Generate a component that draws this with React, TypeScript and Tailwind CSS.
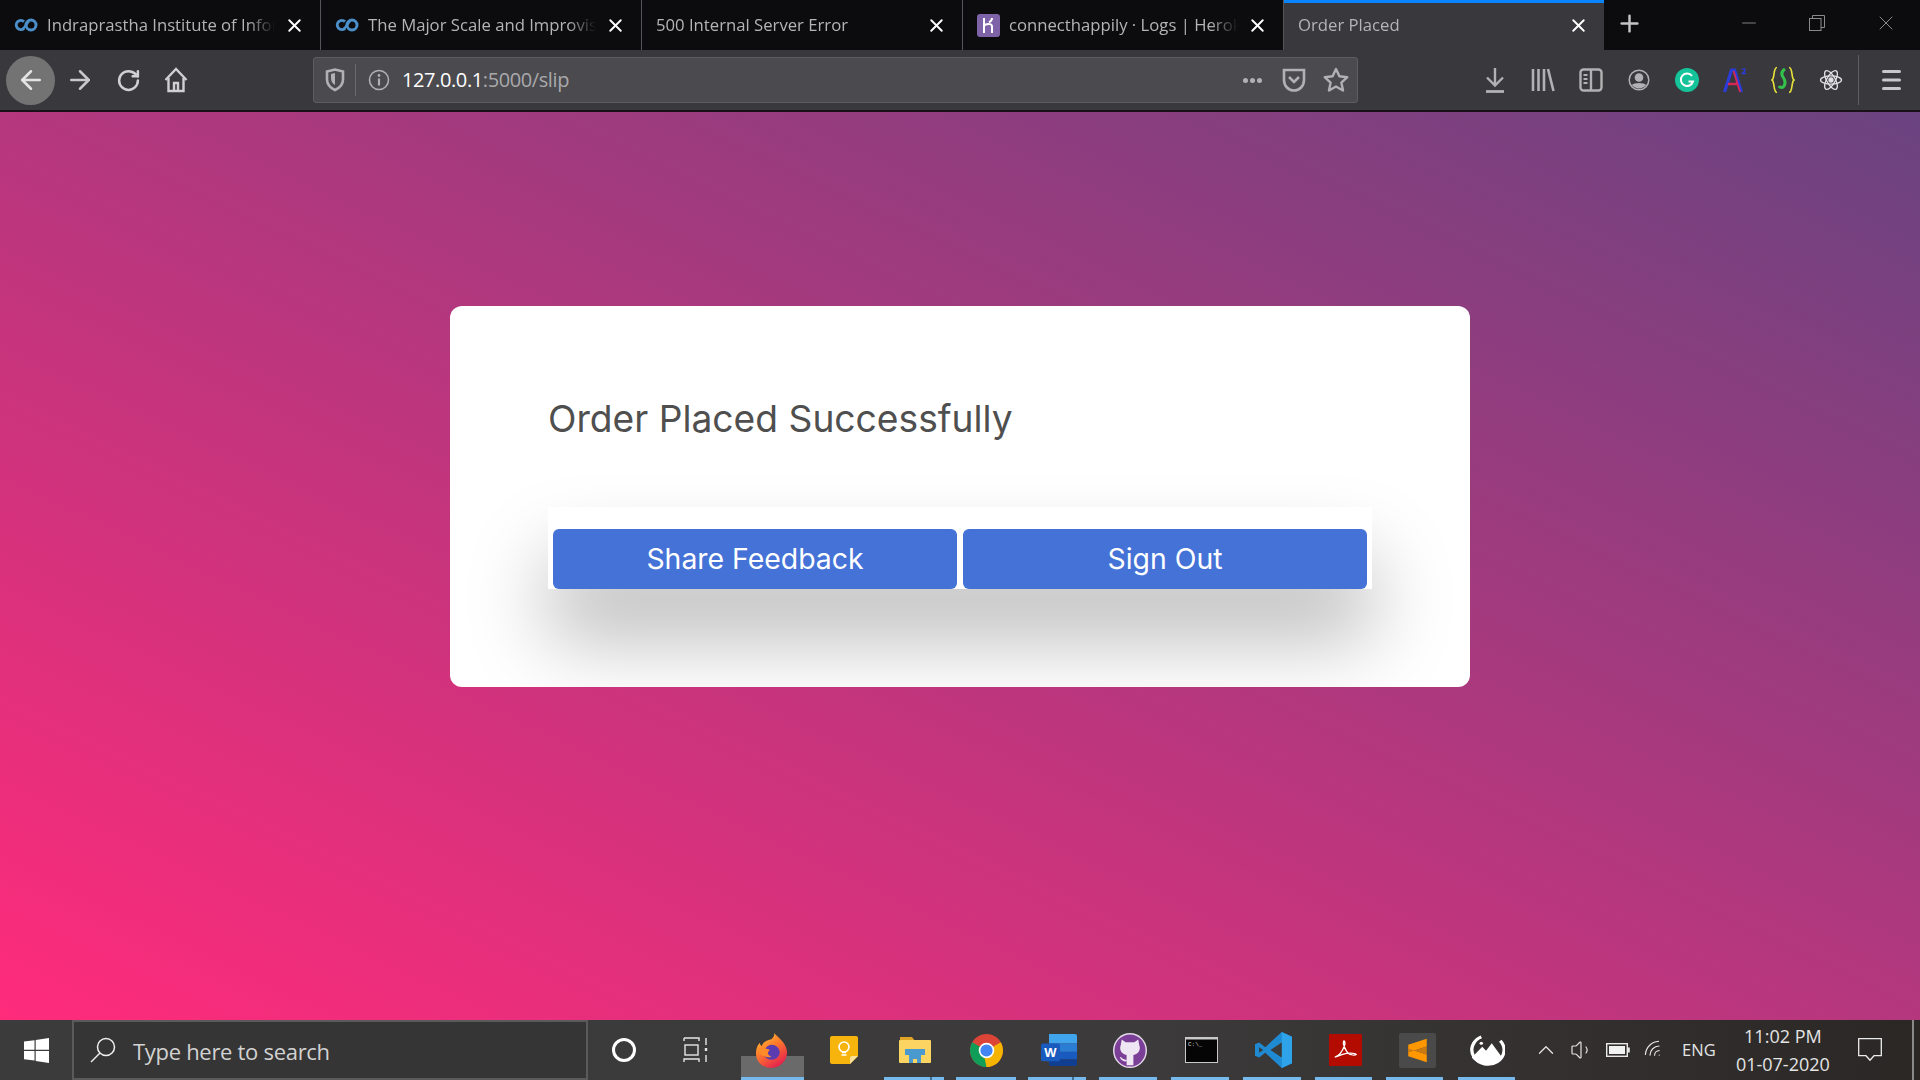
import { X, Plus, Minus, ArrowLeft, ArrowRight, RotateCw, ChevronUp, Volume1, Wifi } from "lucide-react";

const ui = "font-['Open_Sans','Noto_Sans',sans-serif]";

const CoIcon = () => (
  <svg width="24" height="14" viewBox="0 0 24 14" fill="none" className="shrink-0">
    <path d="M10 3.6A4.6 4.6 0 1 0 10 10.4" stroke="#4a8fc9" strokeWidth="3" />
    <circle cx="17" cy="7" r="5" stroke="#4a8fc9" strokeWidth="3" />
    <path d="M9 11 15 3" stroke="#4a8fc9" strokeWidth="2.4" />
  </svg>
);

const HerokuIcon = () => (
  <svg width="23" height="23" viewBox="0 0 23 23" className="shrink-0">
    <rect width="23" height="23" rx="3" fill="#7f63a8" />
    <path d="M7 4v15M7 11.5c3-1.6 8-2.4 8 1V19M15 4c0 2-1.2 3.4-3 4.4" stroke="#fff" strokeWidth="2" fill="none" />
  </svg>
);

type TabProps = { title: string; icon?: React.ReactNode; active?: boolean; width: string };

const Tab = ({ title, icon, active, width }: TabProps) => (
  <div
    className={`${width} h-full shrink-0 flex items-center gap-[9px] pl-[14px] pr-[15px] ${
      active ? "bg-[#38383d] border-t-[3px] border-[#0a84ff] pb-[3px]" : "border-r border-[#55555a]"
    }`}
  >
    {icon}
    <div className="flex-1 min-w-0 overflow-hidden whitespace-nowrap text-[16.7px] text-[#b4b4b6] [mask-image:linear-gradient(to_right,black_88%,transparent)]">
      {title}
    </div>
    <X size={21} strokeWidth={2.2} className="text-white shrink-0" />
  </div>
);

const Shield = () => (
  <svg width="20" height="24" viewBox="0 0 20 24" fill="none">
    <path d="M2 3.500 10 1.500l8 2v8c0 5-3.500 8.500-8 10.500-4.500-2-8-5.500-8-10.500z" stroke="#b1b1b3" strokeWidth="2.600" />
    <path d="M10 5v12c-2.500-1.400-4-3.600-4-6.500V6z" fill="#b1b1b3" />
  </svg>
);

const Info = () => (
  <svg width="22" height="22" viewBox="0 0 22 22" fill="none">
    <circle cx="11" cy="11" r="9.500" stroke="#b1b1b3" strokeWidth="1.600" />
    <circle cx="11" cy="6.500" r="1.400" fill="#b1b1b3" />
    <path d="M11 9.500v7" stroke="#b1b1b3" strokeWidth="2.200" />
  </svg>
);

const Home = () => (
  <svg width="24" height="26" viewBox="0 0 24 26" fill="none" stroke="#d0d0d2" strokeWidth="2.400">
    <path d="M1.500 13 12 2l10.500 11" />
    <path d="M4.500 11v13h15V11" />
    <path d="M10 24v-8h4v8" />
  </svg>
);

const Pocket = () => (
  <svg width="24" height="25" viewBox="0 0 24 25" fill="none" stroke="#b1b1b3" strokeWidth="2.600">
    <path d="M2 2h20v10c0 6-4.500 10.500-10 10.500S2 18 2 12z" />
    <path d="m7 9 5 5 5-5" />
  </svg>
);

const Star = () => (
  <svg width="26" height="26" viewBox="0 0 26 26" fill="none" stroke="#b1b1b3" strokeWidth="2.400" strokeLinejoin="round">
    <path d="m13 2 3.400 7.300 7.900.9-5.900 5.400 1.600 7.900-7-4-7 4 1.600-7.900-5.900-5.400 7.900-.9z" />
  </svg>
);

const Download = () => (
  <svg width="20" height="26" viewBox="0 0 20 26" fill="none" stroke="#b1b1b3" strokeWidth="2.400">
    <path d="M10 1v17M2 10.500 10 18.500l8-8" />
    <path d="M1 24.500h18" strokeWidth="2.800" />
  </svg>
);

const Library = () => (
  <svg width="24" height="24" viewBox="0 0 24 24" fill="none" stroke="#b1b1b3" strokeWidth="2.600">
    <path d="M2 1v22M7.500 1v22M13 1v22M17 1l5.500 22" />
  </svg>
);

const Sidebar = () => (
  <svg width="24" height="24" viewBox="0 0 24 24" fill="none" stroke="#b1b1b3" strokeWidth="2.400">
    <rect x="1.500" y="1.500" width="21" height="21" rx="3" />
    <path d="M12 1.500v21" />
    <path d="M4.500 7h4M4.500 11h4M4.500 15h4" strokeWidth="1.800" />
  </svg>
);

const Account = () => (
  <svg width="22" height="22" viewBox="0 0 22 22" fill="none">
    <circle cx="11" cy="11" r="9.800" stroke="#b1b1b3" strokeWidth="1.500" />
    <circle cx="11" cy="8.500" r="4.300" fill="#b1b1b3" />
    <path d="M3.800 16c2-2.800 12.400-2.800 14.400 0-3.500 4.600-10.900 4.600-14.400 0z" fill="#b1b1b3" />
  </svg>
);

const Grammarly = () => (
  <svg width="24" height="24" viewBox="0 0 24 24" fill="none">
    <circle cx="12" cy="12" r="12" fill="#15c39a" />
    <path d="M17 8a6.200 6.200 0 1 0 1 5.500h-4.500" stroke="#fff" strokeWidth="2" />
  </svg>
);

const AngularA = () => (
  <svg width="24" height="26" viewBox="0 0 24 26" fill="none">
    <path d="M1.500 25 8.500 3h3L18.500 25" stroke="#2b3cd8" strokeWidth="3.200" />
    <path d="M5 17h10" stroke="#d8285a" strokeWidth="2.400" />
    <path d="M10.500 4l6.500 21" stroke="#d8285a" strokeWidth="1.800" />
    <path d="M19 2.500c2-1.500 4 0 2.500 1.800L19.500 6.500H23" stroke="#2b3cd8" strokeWidth="1.400" />
  </svg>
);

const Braces = () => (
  <svg width="24" height="28" viewBox="0 0 24 28" fill="none">
    <path d="M6 1.500C2 1.500 4 12 1 14c3 2 1 12.500 5 12.500M18 1.500c4 0 2 10.500 5 12.500-3 2-1 12.500-5 12.500" stroke="#e8e23a" strokeWidth="1.600" />
    <path d="M14 3c-3 2-4 5-2 8 2 3 3 6 1 9-1 2-4 2-5 0" stroke="#35c24a" strokeWidth="3" />
  </svg>
);

const ReactIcon = () => (
  <svg width="24" height="24" viewBox="-12 -12 24 24" fill="none" stroke="#e2e2e4" strokeWidth="1.300">
    <ellipse rx="10.500" ry="4.200" />
    <ellipse rx="10.500" ry="4.200" transform="rotate(60)" />
    <ellipse rx="10.500" ry="4.200" transform="rotate(120)" />
    <circle r="2" fill="#e2e2e4" />
  </svg>
);

const Hamburger = () => (
  <svg width="20" height="22" viewBox="0 0 20 22" fill="#c8c8ca">
    <rect y="1" width="19" height="3" rx="1.500" />
    <rect y="9.500" width="19" height="3" rx="1.500" />
    <rect y="18" width="19" height="3" rx="1.500" />
  </svg>
);

const Restore = () => (
  <svg width="16" height="16" viewBox="0 0 16 16" fill="none" stroke="#8a8a8c" strokeWidth="1">
    <rect x=".5" y="3.500" width="11.500" height="12" />
    <path d="M3.500 3.500V.5h12v12H12" />
  </svg>
);

const Windows = () => (
  <svg width="25" height="25" viewBox="0 0 25 25" fill="#fff">
    <path d="M0 3.600 10.500 2.200v9.500H0zM11.700 2 25 0v11.700H11.700zM0 13h10.500v9.600L0 21.200zM11.700 13H25v12l-13.300-1.900z" />
  </svg>
);

const SearchGlass = () => (
  <svg width="26" height="26" viewBox="0 0 26 26" fill="none" stroke="#f0f0f0" strokeWidth="1.500">
    <circle cx="16" cy="10" r="8.500" />
    <path d="M10 16 1 25" />
  </svg>
);

const TaskView = () => (
  <svg width="26" height="26" viewBox="0 0 26 26" fill="none" stroke="#e6e6e6" strokeWidth="1.400">
    <path d="M1 1h15v3M1 1v3M1 25v-3h15v3" />
    <rect x="2" y="8" width="13" height="10" />
    <path d="M23 1v7M23 18v7" />
    <rect x="21.800" y="11" width="2.400" height="3" fill="#e6e6e6" stroke="none" />
  </svg>
);

const Firefox = () => (
  <svg width="33" height="35" viewBox="0 0 34 40" preserveAspectRatio="none">
    <defs>
      <linearGradient id="ff" x1="0" y1="0" x2="0.600" y2="1">
        <stop offset="0" stopColor="#ffd23a" />
        <stop offset="0.500" stopColor="#ff7a2a" />
        <stop offset="1" stopColor="#e5254e" />
      </linearGradient>
    </defs>
    <path d="M20 0c2 4 12 10 13 21 .8 10-7 19-16 19S1 33 1 23C1 17 3 13 5 11c0 2 1 3 2 4 1-5 6-7 10-8 2-2 3-4 3-7z" fill="url(#ff)" />
    <circle cx="17" cy="22" r="8.500" fill="#5b3bb0" />
    <path d="M3 20c3-5 7-7 12-6-3 1-4 3-4 4 3 0 4 1 4 2-3 2-2 6 2 7-5 2-12-1-14-7z" fill="#ff8a2a" />
  </svg>
);

const KeepIcon = () => (
  <svg width="28" height="28" viewBox="0 0 28 28">
    <path d="M2 0h24a2 2 0 0 1 2 2v18l-8 8H2a2 2 0 0 1-2-2V2a2 2 0 0 1 2-2z" fill="#f6b40c" />
    <path d="M28 20h-6a2 2 0 0 0-2 2v6z" fill="#fbe09a" />
    <circle cx="14" cy="11" r="5" fill="none" stroke="#fff" strokeWidth="1.600" />
    <path d="M11.500 19h5M12 16.500h4" stroke="#fff" strokeWidth="1.600" />
  </svg>
);

const FilesIcon = () => (
  <svg width="32" height="26" viewBox="0 0 32 26">
    <path d="M1 0h12l3 4H1z" fill="#e0a526" />
    <rect y="3" width="32" height="23" rx="1" fill="#fcd462" />
    <path d="M6 12h20v6H6z" fill="#4a9ad0" />
    <path d="M10 26v-8h12v8z" fill="#4a9ad0" />
    <path d="M14 26v-4h4v4z" fill="#fcd462" />
  </svg>
);

const ChromeIcon = () => (
  <svg width="33" height="33" viewBox="-17 -17 34 34">
    <circle r="17" fill="#db4437" />
    <path d="M-14.700 -8.500A17 17 0 0 0 0 17L8 3 0 0z" fill="#0f9d58" />
    <path d="M14.700 -8.500A17 17 0 0 1 0 17L-2 8 0 0z" fill="#f4b400" />
    <circle r="8" fill="#fff" />
    <circle r="6.300" fill="#4285f4" />
  </svg>
);

const WordIcon = () => (
  <svg width="36" height="32" viewBox="0 0 36 34" preserveAspectRatio="none">
    <path d="M8 0h26a2 2 0 0 1 2 2v8H8z" fill="#41a5ee" />
    <path d="M8 10h28v9H8z" fill="#2b7cd3" />
    <path d="M8 19h28v8H8z" fill="#185abd" />
    <path d="M8 27h28v5a2 2 0 0 1-2 2H10a2 2 0 0 1-2-2z" fill="#103f91" />
    <rect y="10" width="19" height="19" rx="2" fill="#185abd" />
    <text x="9.500" y="24" textAnchor="middle" fontSize="13" fontWeight="700" fill="#fff" fontFamily="Liberation Sans, sans-serif">W</text>
  </svg>
);

const GithubIcon = () => (
  <svg width="34" height="35" viewBox="0 0 35 38" preserveAspectRatio="none">
    <ellipse cx="17.500" cy="19" rx="17.500" ry="19" fill="#e5dce9" />
    <ellipse cx="17.500" cy="19" rx="16" ry="17.500" fill="#7b3f98" />
    <path d="M9 7l4 3h9l4-3 1 6c2 5-1 10-6 11v11h-7V24c-5-1-8-6-6-11z" fill="#eee6f2" />
    <path d="M7 26c2 0 3 3 7 3v2c-4 0-6-2-7-5z" fill="#eee6f2" />
  </svg>
);

const CmdIcon = () => (
  <svg width="33" height="26" viewBox="0 0 33 26">
    <rect width="33" height="26" fill="#c9c9c9" />
    <rect x="1" y="2.500" width="31" height="22.500" fill="#050505" />
    <text x="3" y="9" fontSize="6" fill="#d8d8d8" fontFamily="Liberation Mono, monospace">C:\_</text>
  </svg>
);

const VsCodeIcon = () => (
  <svg width="37" height="36" viewBox="0 0 36 38" preserveAspectRatio="none">
    <path d="M26 0 36 5v28l-10 5L10 22l-6 5-4-2V13l4-2 6 5z" fill="#1f8ad2" />
    <path d="M26 0 36 5v28l-10 5z" fill="#2ea3ea" />
    <path d="M26 11 15 19l11 8z" fill="#3a3a3a" />
    <path d="M4 16l4 3-4 3z" fill="#3a3a3a" />
  </svg>
);

const AcrobatIcon = () => (
  <svg width="33" height="32" viewBox="0 0 34 36" fill="none" preserveAspectRatio="none">
    <rect width="34" height="36" rx="1" fill="#b30b00" />
    <path d="M6 26c4-1 8-7 10-13 1-3 0-6-1-5-1 3 2 11 5 14 2 2 7 2 8 1-1-2-9-2-14 0-3 1-6 3-8 3z" stroke="#fff" strokeWidth="1.400" />
  </svg>
);

const SublimeIcon = () => (
  <svg width="37" height="35" viewBox="0 0 36 36" preserveAspectRatio="none">
    <rect width="36" height="36" rx="2" fill="#4a4a4a" />
    <path d="M27 6v8L9 20v-8zM9 16l18 6v8L9 24z" fill="#ff9800" />
    <path d="M9 20l18-6v8L9 16z" fill="#c97a10" />
  </svg>
);

const MountainIcon = () => (
  <svg width="36" height="32" viewBox="0 0 38 38" fill="none" preserveAspectRatio="none">
    <path d="M13 3.500A17 17 0 1 0 33 8" stroke="#fff" strokeWidth="3.500" />
    <path d="M3 28 14 15l4 5 6-9 11 17c-3 6-10 8-16 8S6 33 3 28z" fill="#fff" />
    <circle cx="13" cy="11" r="1.800" fill="#fff" />
  </svg>
);

const Battery = () => (
  <svg width="24" height="14" viewBox="0 0 24 14" fill="none">
    <rect x=".7" y=".7" width="20.600" height="12.600" stroke="#e8e8e8" strokeWidth="1.400" />
    <rect x="3" y="3" width="16" height="8" fill="#f2f2f2" />
    <rect x="21.800" y="4.500" width="2" height="5" fill="#e8e8e8" />
  </svg>
);

const Notification = () => (
  <svg width="24" height="24" viewBox="0 0 24 24" fill="none" stroke="#ececec" strokeWidth="1.300">
    <path d="M.7.700h22.600v17H16l-4 4.500-4-4.500H.7z" />
  </svg>
);

const Slot = ({ w, children }: { w: string; children: React.ReactNode }) => (
  <div className={`${w} shrink-0 flex items-center justify-center`}>{children}</div>
);

type TaskIconProps = { children: React.ReactNode; bar: string; active?: boolean; split?: boolean; w?: string };

const TaskIcon = ({ children, bar, active, split, w = "w-[71.7px]" }: TaskIconProps) => (
  <div className={`${w} h-full shrink-0 relative flex items-center justify-center`}>
    {active && <div className="absolute bottom-0 left-[5px] w-[63px] h-[24px] bg-[#6a6a6a]" />}
    {bar && (
      <div
        className={`absolute bottom-0 left-[5px] h-[3px] ${bar} ${
          split
            ? "bg-[linear-gradient(to_right,#76b9ed_76%,#3f6f92_76%,#3f6f92_80%,#76b9ed_80%)]"
            : "bg-[#76b9ed]"
        }`}
      />
    )}
    <div className="relative flex">{children}</div>
  </div>
);

export default function App() {
  return (
    <div className={`w-[1920px] h-[1080px] overflow-hidden flex flex-col ${ui}`}>
      {/* tab strip */}
      <div className="h-[50px] shrink-0 bg-[#0c0c0e] flex items-center">
        <Tab width="w-[321px]" icon={<CoIcon />} title="Indraprastha Institute of Information Technology" />
        <Tab width="w-[321px]" icon={<CoIcon />} title="The Major Scale and Improvisation" />
        <Tab width="w-[321px]" title="500 Internal Server Error" />
        <Tab width="w-[321px]" icon={<HerokuIcon />} title="connecthappily · Logs | Heroku" />
        <Tab width="w-[320px]" active title="Order Placed" />
        <div className="w-[50px] flex justify-center pb-[4px]">
          <Plus size={27} strokeWidth={2.2} className="text-[#c4c4c6]" />
        </div>
        <div className="flex-1 flex items-center justify-end pb-[4px] pr-[22px] gap-[49px]">
          <Minus size={22} strokeWidth={1} className="text-[#8a8a8c]" />
          <Restore />
          <X size={24} strokeWidth={1} className="text-[#8a8a8c]" />
        </div>
      </div>

      {/* nav toolbar */}
      <div className="h-[60px] shrink-0 bg-[#38383d] flex items-center pl-[6px]">
        <div className="w-[49px] h-[49px] mr-[1px] rounded-full bg-[#737373] flex items-center justify-center shrink-0">
          <ArrowLeft size={30} strokeWidth={2} className="text-[#e4e4e4]" />
        </div>
        <Slot w="w-[48px]"><ArrowRight size={30} strokeWidth={2} className="text-[#c8c8ca]" /></Slot>
        <Slot w="w-[48px]"><RotateCw size={25} strokeWidth={2.4} className="text-[#d0d0d2]" /></Slot>
        <Slot w="w-[48px]"><Home /></Slot>
        <div className="w-[113px] shrink-0" />
        <div className="w-[1045px] h-[46px] shrink-0 bg-[#4a4a4f] border border-[#5e5e62] rounded-[3px] flex items-center">
          <div className="w-[42px] h-[32px] flex items-center justify-center border-r border-[#6a6a6e]"><Shield /></div>
          <div className="w-[46px] flex items-center justify-center"><Info /></div>
          <div className="flex-1 text-[20px] tracking-[-0.4px] text-[#a9a9ab]">
            <span className="text-white">127.0.0.1</span>:5000/slip
          </div>
          <Slot w="w-[26px]">
            <div className="flex gap-[2px]">
              <div className="w-[5px] h-[5px] rounded-full bg-[#b1b1b3]" />
              <div className="w-[5px] h-[5px] rounded-full bg-[#b1b1b3]" />
              <div className="w-[5px] h-[5px] rounded-full bg-[#b1b1b3]" />
            </div>
          </Slot>
          <Slot w="w-[58px]"><Pocket /></Slot>
          <Slot w="w-[26px]"><Star /></Slot>
          <div className="w-[8px]" />
        </div>
        <div className="w-[113px] shrink-0" />
        <Slot w="w-[48px]"><Download /></Slot>
        <Slot w="w-[48px]"><Library /></Slot>
        <Slot w="w-[48px]"><Sidebar /></Slot>
        <Slot w="w-[48px]"><Account /></Slot>
        <Slot w="w-[48px]"><Grammarly /></Slot>
        <Slot w="w-[48px]"><AngularA /></Slot>
        <Slot w="w-[48px]"><Braces /></Slot>
        <Slot w="w-[48px]"><ReactIcon /></Slot>
        <div className="w-[1px] h-[50px] bg-[#5e5e62] ml-[3px] shrink-0" />
        <Slot w="w-[66px]"><Hamburger /></Slot>
      </div>
      <div className="h-[2px] shrink-0 bg-[#1a1018]" />

      {/* page */}
      <div className="flex-1 min-h-0 bg-[linear-gradient(to_top_right,#ff2b7b,#6a4380)] flex justify-center pt-[194px]">
        <div className="w-[1020px] h-[381px] bg-white rounded-[12px] overflow-hidden pt-[88px] px-[98px] flex flex-col">
          <h1 className="font-['Inter',sans-serif] text-[37.2px] leading-[50px] text-[#4f4f4f] font-normal">
            Order Placed Successfully
          </h1>
          <div className="mt-[63px] h-[82px] shrink-0 bg-white flex items-end gap-[6px] px-[5px] shadow-[0_50px_80px_rgba(0,0,0,0.27)]">
            <button className="flex-1 h-[60px] rounded-[6px] bg-[#4472d6] text-white text-[28.4px] pt-[1px] font-['Inter',sans-serif]">
              Share Feedback
            </button>
            <button className="flex-1 h-[60px] rounded-[6px] bg-[#4472d6] text-white text-[28.4px] pt-[1px] font-['Inter',sans-serif]">
              Sign Out
            </button>
          </div>
        </div>
      </div>

      {/* taskbar */}
      <div className="h-[60px] shrink-0 bg-[linear-gradient(to_right,#3b3b3b,#3c3a3a_60%,#2a2725)] flex items-center text-[#e4e4e4]">
        <Slot w="w-[72px]"><Windows /></Slot>
        <div className="w-[516px] h-full shrink-0 bg-[#353535] border-x-2 border-y-2 border-[#5a5a5a] flex items-center">
          <div className="ml-[16px] flex"><SearchGlass /></div>
          <span className="ml-[17px] pt-[2px] text-[22px] text-[#d2d2d2] tracking-[-0.3px]">Type here to search</span>
        </div>
        <Slot w="w-[71px]">
          <div className="w-[24px] h-[24px] rounded-full border-[3px] border-white" />
        </Slot>
        <Slot w="w-[73px]"><TaskView /></Slot>
        <div className="w-[4px] shrink-0" />
        <TaskIcon active bar="w-[63px]"><Firefox /></TaskIcon>
        <TaskIcon bar=""><KeepIcon /></TaskIcon>
        <TaskIcon split bar="w-[60px]"><FilesIcon /></TaskIcon>
        <TaskIcon bar="w-[60px]"><ChromeIcon /></TaskIcon>
        <TaskIcon split bar="w-[58px]"><WordIcon /></TaskIcon>
        <TaskIcon bar="w-[58px]"><GithubIcon /></TaskIcon>
        <TaskIcon bar="w-[58px]"><CmdIcon /></TaskIcon>
        <TaskIcon bar="w-[58px]"><VsCodeIcon /></TaskIcon>
        <TaskIcon bar="w-[57px]"><AcrobatIcon /></TaskIcon>
        <TaskIcon bar="w-[57px]"><SublimeIcon /></TaskIcon>
        <TaskIcon bar="w-[57px]" w="w-[68px]"><MountainIcon /></TaskIcon>
        <div className="flex-1 flex items-center h-full">
          <div className="w-[7px]" />
          <Slot w="w-[36px]"><ChevronUp size={26} strokeWidth={1.200} /></Slot>
          <Slot w="w-[36px]"><Volume1 size={24} strokeWidth={1.200} /></Slot>
          <Slot w="w-[36px]"><Battery /></Slot>
          <Slot w="w-[37px]"><Wifi size={22} strokeWidth={1.300} className="rotate-[-45deg]" /></Slot>
          <div className="w-[52px] text-center text-[16.5px] text-[#e4e4e4]">ENG</div>
          <div className="w-[116px] text-center text-[18px] leading-[28px]">
            <div>11:02 PM</div>
            <div>01-07-2020</div>
          </div>
          <Slot w="w-[58px]"><Notification /></Slot>
          <div className="w-[2px] h-full bg-[#8a8a8a] ml-auto mr-[6px]" />
        </div>
      </div>
    </div>
  );
}
